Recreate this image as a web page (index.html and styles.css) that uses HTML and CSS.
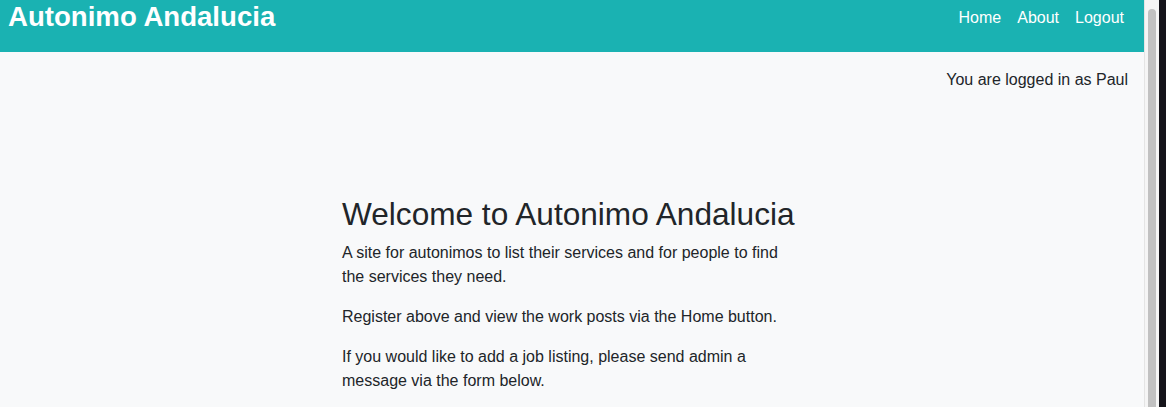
FILE: index.html
```html
<!DOCTYPE html>
<html lang="en">
<head>
<meta charset="utf-8">
<title>Autonimo Andalucia</title>
<link rel="stylesheet" href="styles.css">
</head>
<body>
<div class="frame">
  <div class="page">
    <header class="navbar">
      <a class="brand" href="#">Autonimo Andalucia</a>
      <nav class="nav">
        <a href="#">Home</a>
        <a href="#">About</a>
        <a href="#">Logout</a>
      </nav>
    </header>
    <div class="status">You are logged in as Paul</div>
    <main class="content">
      <h1>Welcome to Autonimo Andalucia</h1>
      <p>A site for autonimos to list their services and for people to find the services they need.</p>
      <p>Register above and view the work posts via the Home button.</p>
      <p>If you would like to add a job listing, please send admin a message via the form below.</p>
    </main>
  </div>
  <div class="scrollbar"><div class="thumb"></div></div>
  <div class="edge"></div>
</div>
</body>
</html>
```
FILE: styles.css
```css
html, body {
  margin: 0;
  padding: 0;
  height: 100%;
  overflow: hidden;
}
body {
  font-family: "Liberation Sans", Arial, sans-serif;
  color: #212529;
  font-size: 16px;
  line-height: 24px;
}
.frame {
  display: flex;
  height: 407px;
  overflow: hidden;
}
.page {
  flex: 1;
  background: #f8f9fa;
  overflow: hidden;
}
.navbar {
  height: 52px;
  background: #1ab2b2;
  display: flex;
  justify-content: space-between;
  align-items: flex-start;
  padding: 0 12px 0 8px;
  box-sizing: border-box;
}
.brand {
  color: #fff;
  font-weight: bold;
  font-size: 27.6px;
  line-height: 34px;
  text-decoration: none;
}
.nav {
  display: flex;
  padding-top: 6px;
}
.nav a {
  color: #fff;
  text-decoration: none;
  padding: 0 8px;
  line-height: 24px;
}
.status {
  text-align: right;
  padding: 16px 16px 0 0;
  line-height: 24px;
}
.content {
  width: 460px;
  margin: 103px 0 0 342px;
}
.content h1 {
  font-size: 31.6px;
  font-weight: 400;
  line-height: 38px;
  margin: 0 0 8px;
}
.content p {
  margin: 0 0 16px;
}
.scrollbar {
  width: 15px;
  background: #f5f5f5;
  border-left: 1px solid #e4e4e4;
  box-sizing: border-box;
  padding: 9px 3px 0 3px;
  display: flex;
  flex-direction: column;
}
.thumb {
  flex: 1;
  background: #c1c1c1;
  border-radius: 5px 5px 0 0;
}
.edge {
  width: 7px;
  background: #15141a;
}
```
